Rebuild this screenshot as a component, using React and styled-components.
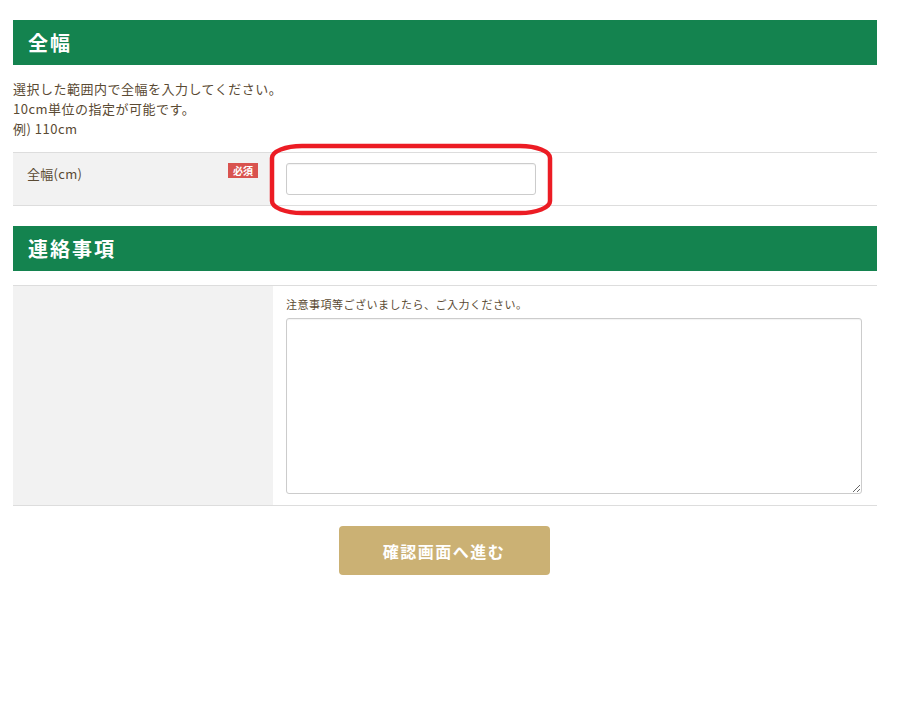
import styled, { createGlobalStyle } from 'styled-components'

const GlobalStyle = createGlobalStyle`
  html, body {
    margin: 0;
    padding: 0;
    background: #fff;
  }
  body {
    font-family: "Noto Sans CJK JP", "Noto Sans", "Liberation Sans", sans-serif;
    color: #5a4a33;
  }
`

const Page = styled.div`
  width: 864px;
  padding: 20px 0 40px 13px;
`

const SectionTitle = styled.h2`
  margin: ${p => p.$top || 0}px 0 0;
  height: 45px;
  display: flex;
  align-items: center;
  padding: 0 15px;
  background: #14834f;
  color: #fff;
  font-size: 20px;
  font-weight: 700;
  letter-spacing: 2px;
`

const Lead = styled.p`
  margin: 14px 0 13px;
  font-size: 13px;
  line-height: 20px;
  letter-spacing: 0.5px;
`

const Table = styled.div`
  margin-top: ${p => p.$top || 0}px;
  border-top: 1px solid #ddd;
  border-bottom: 1px solid #ddd;
`

const Row = styled.div`
  position: relative;
  display: grid;
  grid-template-columns: 260px 1fr;
  min-height: ${p => p.$height || 52}px;
`

const Head = styled.div`
  background: #f2f2f2;
  display: flex;
  align-items: flex-start;
  justify-content: space-between;
  padding: 10px 15px 0 14px;
  font-size: 13px;
  line-height: 20px;
  letter-spacing: 0.3px;
`

const Label = styled.span`
  margin-top: 1px;
`

const Badge = styled.span`
  display: inline-flex;
  align-items: center;
  justify-content: center;
  width: 30px;
  height: 15px;
  background: #d9534f;
  color: #fff;
  font-size: 10px;
  line-height: 15px;
  font-weight: 700;
  letter-spacing: 0;
`

const Cell = styled.div`
  padding: 10px 15px 10px 13px;
`

const TextInput = styled.input`
  display: block;
  box-sizing: border-box;
  width: 250px;
  height: 32px;
  border: 1px solid #ccc;
  border-radius: 3px;
  background: #fff;
  box-shadow: inset 0 1px 1px rgba(0, 0, 0, 0.05);
`

const Note = styled.p`
  margin: 0 0 6px;
  font-size: 11px;
  line-height: 16px;
  letter-spacing: 0.5px;
`

const TextArea = styled.textarea`
  display: block;
  box-sizing: border-box;
  width: 576px;
  height: 176px;
  border: 1px solid #ccc;
  border-radius: 3px;
  background: #fff;
  resize: both;
  box-shadow: inset 0 1px 1px rgba(0, 0, 0, 0.05);
`

const Actions = styled.div`
  display: flex;
  justify-content: center;
  margin-top: 20px;
  padding-right: 2px;
`

const Submit = styled.button`
  width: 211px;
  height: 49px;
  border: 0;
  border-radius: 4px;
  background: #cbb174;
  color: #fff;
  font-family: inherit;
  font-size: 16px;
  font-weight: 700;
  letter-spacing: 1.5px;
  cursor: pointer;
`

const Highlight = styled.svg`
  position: absolute;
  left: 255px;
  top: -12px;
  pointer-events: none;
`

const App = () => {
  return (
    <Page>
      <GlobalStyle />
      <SectionTitle>全幅</SectionTitle>
      <Lead>
        選択した範囲内で全幅を入力してください。<br />
        10cm単位の指定が可能です。<br />
        例) 110cm
      </Lead>
      <Table>
        <Row>
          <Head>
            <Label>全幅(cm)</Label>
            <Badge>必須</Badge>
          </Head>
          <Cell>
            <TextInput type="text" />
          </Cell>
          <Highlight width="290" height="80" viewBox="0 0 290 80">
            <rect x="4" y="5" width="278" height="67" rx="30" ry="12" fill="none" stroke="#ec1c24" strokeWidth="4.5" />
          </Highlight>
        </Row>
      </Table>

      <SectionTitle $top={20}>連絡事項</SectionTitle>
      <Table $top={14}>
        <Row $height={219}>
          <Head />
          <Cell>
            <Note>注意事項等ございましたら、ご入力ください。</Note>
            <TextArea />
          </Cell>
        </Row>
      </Table>

      <Actions>
        <Submit type="button">確認画面へ進む</Submit>
      </Actions>
    </Page>
  )
}

export default App
